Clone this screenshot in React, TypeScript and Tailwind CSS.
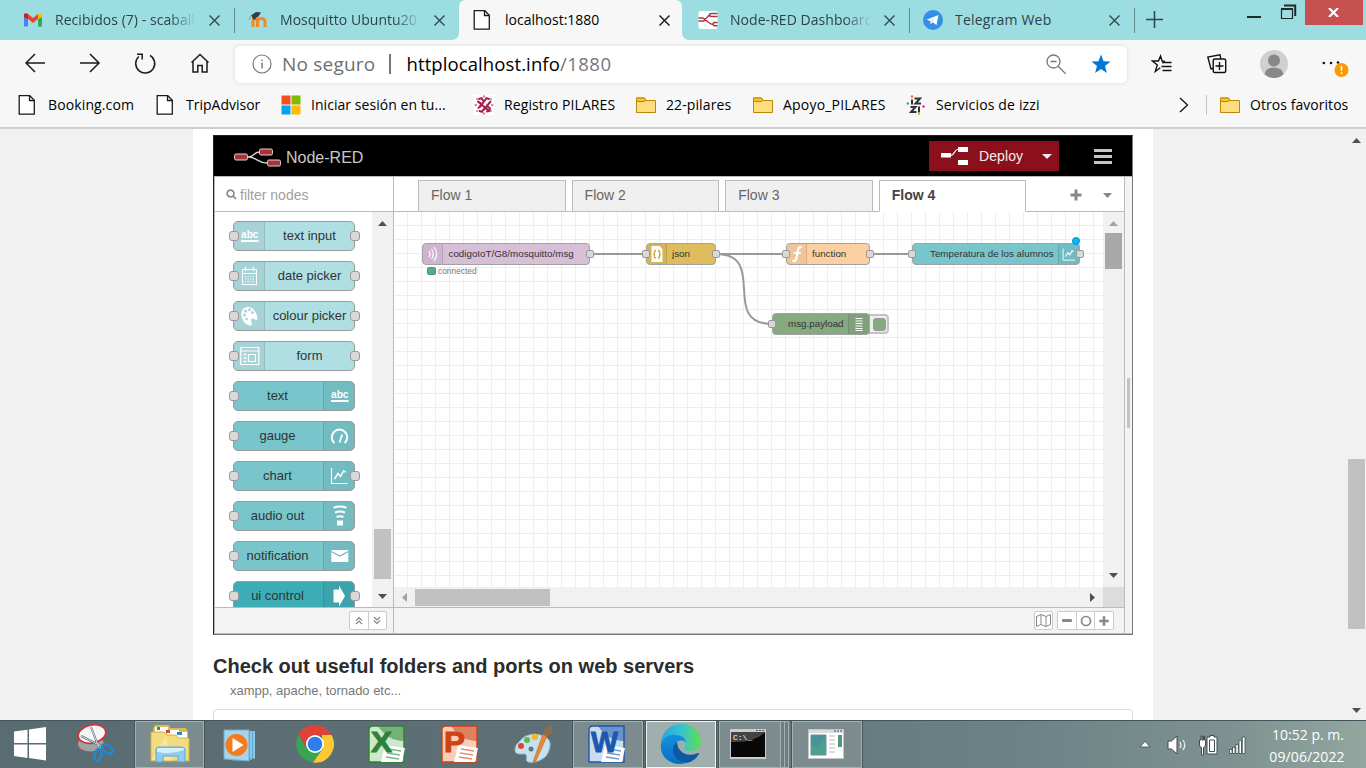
import type { ReactNode } from "react";

const ui = "font-['Open_Sans','Noto_Sans',sans-serif]";
const arial = "font-['Liberation_Sans',Arial,sans-serif]";

/* ---------- small shared drawings ---------- */

function CloseX({ dark }: { dark?: boolean }) {
  return (
    <svg width="11" height="11" viewBox="0 0 11 11" stroke={dark ? "#111" : "#2c4a4d"} strokeWidth="1.4">
      <path d="M.5.5l10 10M10.500.5l-10 10" />
    </svg>
  );
}

function PageIcon() {
  return (
    <svg width="20" height="20" viewBox="0 0 20 20" fill="none" stroke="#1a1a1a" strokeWidth="1.3">
      <path d="M1.200.700h10.600l4.500 4.500v14H1.200z" fill="#fff" />
      <path d="M11.500.700v4.800h4.800" />
    </svg>
  );
}

function FolderIcon() {
  return (
    <svg width="20" height="20" viewBox="0 0 20 20" stroke="#b8860b" strokeWidth="1">
      <path d="M.5 3h8l1.500 2.500h9.500v12H.5z" fill="#ffdc7c" />
      <path d="M.5 3h8l1.200 1.800L8.500 6.500H.5z" fill="#f9c521" />
    </svg>
  );
}

function Triangle({ dir, color = "#505050" }: { dir: "up" | "down" | "left" | "right"; color?: string }) {
  const d = { up: "M0 7l4.500-5L9 7z", down: "M0 2h9L4.500 7z", left: "M7 0v9L2 4.500z", right: "M2 0v9l5-4.500z" }[dir];
  return (
    <svg width="9" height="9" viewBox="0 0 9 9" fill={color} className="shrink-0">
      <path d={d} />
    </svg>
  );
}

/* ---------- browser tabs ---------- */

const gmail = (
  <svg width="20" height="20" viewBox="0 0 20 20">
    <path d="M1 16.500V5.500l4 3v8z" fill="#4285f4" />
    <path d="M15 16.500v-8l4-3v11z" fill="#34a853" />
    <path d="M5 4l5 4 5-4v4.800L10 13 5 8.800z" fill="#ea4335" />
    <path d="M1 7V5c0-2 2-2 4-1v5.200z" fill="#c5221f" />
    <path d="M19 7V5c0-2-2-2-4-1v5.200z" fill="#fbbc04" />
  </svg>
);

const moodle = (
  <svg width="20" height="20" viewBox="0 0 20 20" fill="none">
    <path d="M5 17V11.500c0-4 4-4 4.500-.500V17M9.500 17v-5.500c.500-4 7.500-4.500 7.500.500v5" stroke="#f08a24" strokeWidth="3" />
    <path d="M3 5.500L8 2l5 .500-3 4.500-2 .500-1 2.500C5 9 4 8 4 6.500z" fill="#333c40" />
    <path d="M2.500 6L1 10" stroke="#7c9495" strokeWidth=".8" />
  </svg>
);

const nodeRedFav = (
  <svg width="20" height="20" viewBox="0 0 20 20">
    <rect x=".5" y="1" width="19" height="18" rx="2" fill="#fff" />
    <g fill="none" stroke="#a9383d" strokeWidth="1.400">
      <path d="M.5 8h4q1.500 0 2 1.500t-2 1.500h-4M6.500 9c3 0 3-4 6-4.500M6 10c4 0 5 4.500 9 4.500M19.500 3.500h-6q-2 0-2 1.500t2 1.500h6M19.500 12.500h-3q-1.500 0-1.500 1.500t1.500 1.800h3" />
    </g>
  </svg>
);

const telegram = (
  <svg width="20" height="20" viewBox="0 0 20 20">
    <circle cx="10" cy="10" r="10" fill="#348fe8" />
    <path d="M3.500 9.700L15.500 5l-2 10-3.800-2.700-1.900 1.900-.6-3.200z" fill="#fff" />
    <path d="M7.500 11l5.500-3.800-4.400 4.700-.7 2.100z" fill="#b9d8f7" />
  </svg>
);

function Tab({ icon, title, track, fade, active, line }: { icon: ReactNode; title: string; track: string; fade?: boolean; active?: boolean; line?: boolean }) {
  return (
    <div className={`relative flex h-10 w-[225px] items-center pl-[14px] ${active ? "text-black" : "text-[#2b4548]"}`}>
      {active && (
        <svg className="absolute left-[-8px] top-0" width="240" height="40" viewBox="0 0 240 40">
          <path d="M0 40q8 0 8-8V7q0-7 7-7h209q7 0 7 7v25q0 8 8 8z" fill="#f7f7f7" />
        </svg>
      )}
      <div className="relative flex w-5 items-center">{icon}</div>
      <div
        className={`relative ml-3 w-[143px] overflow-hidden pb-[2px] whitespace-nowrap text-[14px] ${track} ${fade ? "[mask-image:linear-gradient(90deg,#000_80%,transparent_99%)]" : ""}`}
      >
        {title}
      </div>
      <div className="relative ml-[11px]">
        <CloseX dark={active} />
      </div>
      {line && <div className="mr-[-1px] ml-auto h-[25px] w-px bg-[#66898c]" />}
    </div>
  );
}

function TabStrip() {
  return (
    <div className="flex h-10 bg-[#9cdde2] pl-[9px]">
      <Tab icon={gmail} title="Recibidos (7) - scaball" track="tracking-[0.050px]" fade line />
      <Tab icon={moodle} title="Mosquitto Ubuntu20." track="tracking-[0.050px]" fade />
      <Tab icon={<PageIcon />} title="localhost:1880" track="tracking-normal" active />
      <Tab icon={nodeRedFav} title="Node-RED Dashboard" track="tracking-[0.050px]" fade line />
      <Tab icon={telegram} title="Telegram Web" track="tracking-[0.2px]" line />
      <svg className="ml-[12px] mt-[11px]" width="17" height="17" viewBox="0 0 17 17" stroke="#2c4a4d" strokeWidth="1.600">
        <path d="M8.500 0v17M0 8.500h17" />
      </svg>
      <svg className="ml-[84px] mt-[3px]" width="52" height="18" viewBox="0 0 52 18" fill="none" stroke="#1f2a2b">
        <path d="M0 14h14" strokeWidth="2" />
        <path d="M34.500 6.500h11v9h-11z" strokeWidth="1.200" />
        <path d="M34 6h12" strokeWidth="2" />
        <path d="M37 2.500h11.200v10.500" strokeWidth="2" />
      </svg>
      <div className="ml-[6px] flex h-[25px] w-[58px] items-center justify-center bg-[#c75050] pr-[1px] pb-[1px]">
        <svg width="11" height="9" viewBox="0 0 11 9" stroke="#fff" strokeWidth="2.200">
          <path d="M1 0l9 9M10 0L1 9" />
        </svg>
      </div>
    </div>
  );
}

/* ---------- toolbar ---------- */

function Toolbar() {
  return (
    <div className="flex h-12 items-center bg-[#f7f7f7] pl-[25px]">
      <svg width="190" height="22" viewBox="0 0 190 22" fill="none" stroke="#1b1b1b" strokeWidth="1.500">
        <path d="M20 10H1M10 1L1 10l9 9" />
        <path d="M55 10h19M65 1l9 9-9 9" />
        <path d="M125 2.300A9.500 9.500 0 1 1 113.800 3.500M112 1.300h5.200v5.200" />
        <path d="M166.500 9.500l8.500-8 8.500 8M168 8.300v10.700h4.800v-6.500h4.400v6.500h4.800V8.300" />
      </svg>
      <div className="ml-5 flex h-[37px] w-[892px] items-center rounded-[5px] bg-white pl-[17px] shadow-[0_0_4px_rgba(0,0,0,0.12)]">
        <svg width="20" height="20" viewBox="0 0 20 20" fill="none" stroke="#767676" strokeWidth="1.200">
          <circle cx="10" cy="10" r="9" />
          <path d="M10 8.500v6M10 5.500v1.500" strokeWidth="1.400" />
        </svg>
        <span className="ml-[10px] w-[107px] text-[19px] tracking-[0.2px] text-[#6f6f6f]">No seguro</span>
        <span className="h-5 w-[1.500px] bg-[#777]" />
        <span className="ml-[16px] text-[18.500px] tracking-[0.1px] whitespace-nowrap text-black">
          httplocalhost.info<span className="tracking-[0.5px] text-[#767676]">/1880</span>
        </span>
        <svg className="ml-auto mr-[25px]" width="21" height="21" viewBox="0 0 21 21" fill="none" stroke="#777" strokeWidth="1.300">
          <circle cx="8.500" cy="7.500" r="6.500" />
          <path d="M13.200 12.300l7.500 7.500M5.500 7.500h6" />
        </svg>
        <svg className="mr-4" width="20" height="20" viewBox="0 0 20 20" fill="#0078d7">
          <path d="M10 .5l2.500 6.700 7 .3-5.500 4.400 1.900 7L10 15l-5.900 3.900L6 11.900.5 7.500l7-.3z" />
        </svg>
      </div>
      <svg className="ml-[24px]" width="22" height="20" viewBox="0 0 22 20" fill="none" stroke="#111" strokeWidth="1.400">
        <path d="M14 7.200l-2.900-.2L9.500 2 7.500 7H1.300l5 3.900-2 6.600 5-3.700M11 8.500h9.500M10.500 12.500h10M11.500 16.500h9" />
      </svg>
      <svg className="ml-[34px]" width="20" height="20" viewBox="0 0 20 20" fill="none" stroke="#111" strokeWidth="1.400">
        <path d="M6 14.500L4 15 .8 3 13 .8l.8 3.700" />
        <rect x="6.200" y="5" width="12.500" height="13.500" rx="1.500" fill="#f7f7f7" />
        <path d="M12.500 8v8M8.500 12h8" />
      </svg>
      <svg className="ml-[33px]" width="28" height="28" viewBox="0 0 28 28">
        <circle cx="14" cy="14" r="14" fill="#d2d0ce" />
        <circle cx="14" cy="10.500" r="6" fill="#8a8886" />
        <path d="M4.500 24.200Q6 17.500 14 17.500t9.500 6.700A14 14 0 0 1 4.500 24.200z" fill="#8a8886" />
      </svg>
      <svg className="ml-[34px]" width="28" height="26" viewBox="0 0 28 26">
        <g fill="#111">
          <circle cx="1.800" cy="12" r="1.300" />
          <circle cx="9" cy="12" r="1.300" />
          <circle cx="16" cy="11.500" r="1.300" />
        </g>
        <circle cx="19.500" cy="19" r="7" fill="#f79a05" />
        <path d="M19.500 14.800v5M19.500 21.300v1.700" stroke="#fff" strokeWidth="1.500" />
      </svg>
    </div>
  );
}

/* ---------- bookmarks ---------- */

const msLogo = (
  <svg width="20" height="20" viewBox="0 0 20 20">
    <path d="M.5.5h9v9h-9z" fill="#f25022" />
    <path d="M10.500.5h9v9h-9z" fill="#7fba00" />
    <path d="M.5 10.500h9v9h-9z" fill="#00a4ef" />
    <path d="M10.500 10.500h9v9h-9z" fill="#ffb900" />
  </svg>
);

const pilares = (
  <svg width="20" height="20" viewBox="0 0 20 20" fill="none">
    <rect width="20" height="20" fill="#fff" />
    <g stroke="#a91e4b" strokeWidth="2" strokeLinecap="round">
      <path d="M5 4l2.500-.8 1.700 2.600M4 6.500l10.500 9M7 8.500L5 7M15 4l-2.500-.8L6 12M16.500 6.500l-6.500 8M4.500 13l2-2.500M5.500 16l2.500.8 2-3M13 16.500l2.500-.5.5-2.500-3-2.500" />
    </g>
    <g fill="#cf7f98">
      <circle cx="10" cy="1.500" r="1.200" />
      <circle cx="10" cy="18.500" r="1.200" />
      <circle cx="1.800" cy="10" r="1.200" />
      <circle cx="18.200" cy="10" r="1.200" />
      <circle cx="3" cy="4" r="1" />
      <circle cx="17" cy="4" r="1" />
      <circle cx="3" cy="16" r="1" />
      <circle cx="17" cy="16" r="1" />
    </g>
  </svg>
);

const izzi = (
  <svg width="20" height="20" viewBox="0 0 20 20" fill="none" stroke="#333" strokeWidth="2">
    <path d="M6 4.500v5M8.500 3.500h5.500L9.500 8.500H15M4.500 12H9.500L5 17h5.500M13 11.500v6" />
    <g stroke="none">
      <circle cx="6" cy="1.500" r="1.200" fill="#f26b21" />
      <circle cx="1.800" cy="8.500" r="1.200" fill="#2aa6a0" />
      <circle cx="17.500" cy="11.500" r="1.200" fill="#d6268f" />
      <circle cx="13" cy="19" r="1.200" fill="#f4c20d" />
    </g>
  </svg>
);

function Bookmark({ icon, text, width, track = "" }: { icon: ReactNode; text: string; width: string; track?: string }) {
  return (
    <div className={`flex shrink-0 items-center gap-[10px] whitespace-nowrap ${width} ${track}`}>
      <span className="w-5 shrink-0">{icon}</span>
      {text}
    </div>
  );
}

function Bookmarks() {
  return (
    <div className="flex h-[39px] items-center bg-[#f7f7f7] pb-[6px] pl-[18px] text-[14px] text-black">
      <Bookmark icon={<PageIcon />} text="Booking.com" width="w-[138px] -mr-px pr-px" track="tracking-[0.120px]" />
      <Bookmark icon={<PageIcon />} text="TripAdvisor" width="ml-px w-[125px]" />
      <Bookmark icon={msLogo} text="Iniciar sesión en tu..." width="w-[193px]" track="tracking-[0.050px]" />
      <Bookmark icon={pilares} text="Registro PILARES" width="w-[162px]" track="tracking-[0.100px]" />
      <Bookmark icon={<FolderIcon />} text="22-pilares" width="w-[117px]" track="tracking-[0.100px]" />
      <Bookmark icon={<FolderIcon />} text="Apoyo_PILARES" width="w-[153px]" track="tracking-[0.200px]" />
      <Bookmark icon={izzi} text="Servicios de izzi" width="w-[273px]" track="tracking-[0.160px]" />
      <svg width="10" height="16" viewBox="0 0 10 16" fill="none" stroke="#111" strokeWidth="1.300">
        <path d="M1 1l7.500 7L1 15" />
      </svg>
      <div className="mr-[13px] ml-[17px] h-5 w-px bg-[#c4c4c4]" />
      <Bookmark icon={<FolderIcon />} text="Otros favoritos" width="w-[130px]" track="tracking-[0.050px]" />
    </div>
  );
}

/* ---------- palette ---------- */

const abcIcon = (
  <svg width="20" height="18" viewBox="0 0 20 18" fill="#fff">
    <text x="1" y="11" fontSize="11" fontWeight="700" fontFamily="Liberation Sans" textLength="17.500" lengthAdjust="spacingAndGlyphs">abc</text>
    <path d="M1 13h17.500v2H1z" />
  </svg>
);
const calendarIcon = (
  <svg width="18" height="20" viewBox="0 0 18 20" fill="none" stroke="#fff">
    <path d="M1.500 3.500h14v15h-14zM1.500 7.500h14" />
    <path d="M4.500 1v4M12.500 1v4" strokeWidth="1.500" />
    <path d="M4 10.500h10M4 13h10M4 15.500h10" strokeDasharray="1.200 1.400" />
  </svg>
);
const paletteIcon = (
  <svg width="20" height="20" viewBox="0 0 20 20">
    <path d="M8 1C3 1 1 5 1.500 9.500 2 15 6 19 10 19.500c2.500 0 2-2.500 1.300-4.200-.8-2 .7-3.300 2.700-2.500 1 .4 2 2.700 3.300 1C18 9 14 1 8 1z" fill="#fff" />
    <g fill="#a9d3d7">
      <circle cx="4.500" cy="9" r="1.500" />
      <circle cx="5.500" cy="5" r="1.500" />
      <circle cx="9.500" cy="3.800" r="1.500" />
      <circle cx="12.500" cy="6.500" r="1.500" />
      <circle cx="6.500" cy="13" r="1.300" />
    </g>
  </svg>
);
const formIcon = (
  <svg width="20" height="20" viewBox="0 0 20 20" fill="none" stroke="#fff">
    <path d="M.8 1.500h18v17H.8zM.8 5h18M8.500 8.500h7v7h-7z" strokeWidth="1.200" />
    <path d="M3.500 8.500h3M3.500 12h3M3.500 15.500h3" strokeWidth="1.300" />
  </svg>
);
const gaugeIcon = (
  <svg width="20" height="20" viewBox="0 0 20 20" fill="none" stroke="#fff" strokeWidth="2">
    <path d="M4.300 17A7.700 7.700 0 1 1 14.700 17" />
    <path d="M12.200 8.500L9.500 16.500" strokeWidth="1.800" />
  </svg>
);
function ChartIcon({ size = "20" }: { size?: string }) {
  return (
    <svg width={size} height={size} viewBox="0 0 20 20" fill="none" stroke="#fff" strokeWidth="1.200">
      <path d="M1.500 2v15.500h16" />
      <path d="M4.500 13l3.500-5.500 2.500 3 3-5.500 2 1" strokeWidth="1.500" />
    </svg>
  );
}
const audioIcon = (
  <svg width="18" height="22" viewBox="0 0 18 22" fill="none" stroke="#fff" strokeWidth="2">
    <path d="M2.500 2.800q6.500-2.400 13 0M4 7.500q5-2 10 0M5.500 12q3.500-1.600 7 0" />
    <path d="M6 15.500h6v5H6z" fill="#fff" stroke="none" />
  </svg>
);
const mailIcon = (
  <svg width="20" height="14" viewBox="0 0 20 14">
    <path d="M1.300 1h17v12h-17z" fill="#fff" />
    <path d="M1.300 2.500l8.500 4.500 8.500-4.500" fill="none" stroke="#71b9c0" strokeWidth="1.300" />
  </svg>
);
const arrowIcon = (
  <svg width="20" height="22" viewBox="0 0 20 22" fill="#fff">
    <path d="M3.500 4.500h5.500V.5l6 10.500L9 21.500v-4H3.500z" />
  </svg>
);

function Port({ pos }: { pos: string }) {
  return <span className={`absolute size-[10px] rounded-[3px] border border-[#999] bg-[#d9d9d9] ${pos}`} />;
}

function PaletteNode({ label, icon, side, color, output }: { label: string; icon: ReactNode; side: "left" | "right"; color: string; output?: boolean }) {
  const box = (
    <span className={`flex w-[31px] items-center justify-center bg-black/5 pl-[2px] ${side === "left" ? "rounded-l-[4px] border-r" : "rounded-r-[4px] border-l"} border-black/10`}>
      {icon}
    </span>
  );
  return (
    <div className={`relative flex h-[30px] w-[122px] shrink-0 rounded-[5px] border border-[#999] ${color}`}>
      {side === "left" && box}
      <span className={`flex-1 pt-[5px] text-center text-[13px] leading-[18px] whitespace-nowrap text-[#333] ${side === "right" ? "pr-[2px]" : ""}`}>{label}</span>
      {side === "right" && box}
      <Port pos="left-[-5px] top-[9px]" />
      {output && <Port pos="right-[-6px] top-[9px]" />}
    </div>
  );
}

function Palette() {
  const light = "bg-[#b0dfe3]";
  const mid = "bg-[#78c6cc]";
  return (
    <div className="flex w-[179px] shrink-0 flex-col border-r border-[#bbb]">
      <div className="flex h-[35px] items-center border-b border-[#bbb] bg-white pl-[11px]">
        <svg width="11" height="11" viewBox="0 0 11 11" fill="none" stroke="#888" strokeWidth="1.700">
          <circle cx="4.500" cy="4.500" r="3.400" />
          <path d="M7 7l3 3" />
        </svg>
        <span className="ml-[3px] pt-[2px] text-[14px] text-[#a0a0a0]">filter nodes</span>
      </div>
      <div className="flex h-[395px] overflow-hidden">
        <div className="flex flex-1 flex-col gap-[10px] bg-white pl-[18px] pt-[9px]">
          <PaletteNode label="text input" icon={abcIcon} side="left" color={light} output />
          <PaletteNode label="date picker" icon={calendarIcon} side="left" color={light} output />
          <PaletteNode label="colour picker" icon={paletteIcon} side="left" color={light} output />
          <PaletteNode label="form" icon={formIcon} side="left" color={light} output />
          <PaletteNode label="text" icon={abcIcon} side="right" color={mid} />
          <PaletteNode label="gauge" icon={gaugeIcon} side="right" color={mid} />
          <PaletteNode label="chart" icon={<ChartIcon />} side="right" color={mid} output />
          <PaletteNode label="audio out" icon={audioIcon} side="right" color={mid} />
          <PaletteNode label="notification" icon={mailIcon} side="right" color={mid} />
          <PaletteNode label="ui control" icon={arrowIcon} side="right" color="bg-[#3fadb5]" output />
        </div>
        <div className="flex w-[21px] flex-col items-center bg-[#f1f1f1] pt-[7px]">
          <Triangle dir="up" />
          <div className="mt-[301px] h-[50px] w-[17px] bg-[#c1c1c1]" />
          <div className="mt-[13px]">
            <Triangle dir="down" />
          </div>
        </div>
      </div>
      <div className="flex h-[26px] items-center justify-end border-t border-[#bbb] bg-[#f3f3f3] pr-[6px]">
        <div className="flex h-[19px] w-[38px] rounded-[2px] border border-[#ccc] bg-white">
          <span className="flex flex-1 items-center justify-center border-r border-[#ccc]">
            <svg width="8" height="9" viewBox="0 0 8 9" fill="none" stroke="#888" strokeWidth="1.200">
              <path d="M1 4.600L4 1.700l3 2.900M1 8L4 5.100 7 8" />
            </svg>
          </span>
          <span className="flex flex-1 items-center justify-center">
            <svg width="8" height="9" viewBox="0 0 8 9" fill="none" stroke="#888" strokeWidth="1.200">
              <path d="M1 1l3 2.900L7 1M1 4.500l3 2.900 3-2.900" />
            </svg>
          </span>
        </div>
      </div>
    </div>
  );
}

/* ---------- workspace ---------- */

function FlowTab({ name, active }: { name: string; active?: boolean }) {
  return (
    <div
      className={`h-[32px] w-[147.600px] border border-[#bbb] pl-3 pt-[5px] text-[14px] leading-[18px] ${active ? "border-b-white bg-white font-bold text-[#444]" : "bg-[#f0f0f0] text-[#666]"}`}
    >
      {name}
    </div>
  );
}

function SmallPort({ pos }: { pos: string }) {
  return <span className={`absolute size-[8px] rounded-[2px] border border-[#999] bg-[#d9d9d9] ${pos}`} />;
}

function FlowNode({ place, label, children, labelClass }: { place: string; label: string; labelClass: string; children?: ReactNode }) {
  return (
    <div className={`absolute flex h-[22px] rounded-[4px] border border-[#a3a3a3] ${place}`}>
      <span className={`absolute top-[4px] text-[9.800px] leading-[12px] whitespace-nowrap text-[#333] ${labelClass}`}>{label}</span>
      {children}
    </div>
  );
}

function Canvas() {
  return (
    <div className="relative h-[375px] w-[709px] overflow-hidden bg-white bg-[linear-gradient(to_right,#eee_1px,transparent_1px),linear-gradient(to_bottom,#eee_1px,transparent_1px)] bg-[size:14px_14px] bg-[position:13px_13px]">
      <svg className="absolute inset-0" width="709" height="375" viewBox="0 0 709 375" fill="none" stroke="#999" strokeWidth="2">
        <path d="M196 42h56M322 42h70M476 42h42M322 42c53 0 3 70 56 70" />
      </svg>
      <FlowNode place="left-[28px] top-[31px] w-[168px] bg-[#d8bfd8]" label="codigoIoT/G8/mosquitto/msg" labelClass="left-[25.500px]">
        <span className="flex w-[20px] items-center justify-center rounded-l-[3px] border-r border-black/10 bg-black/5">
          <svg width="12" height="18" viewBox="0 0 12 18" fill="none" stroke="#fff" strokeWidth="1.200">
            <path d="M2 6q2 3 0 6M4.500 4q3.500 5 0 10M7 2q5.500 7 0 14" />
          </svg>
        </span>
        <SmallPort pos="right-[-5px] top-[6px]" />
      </FlowNode>
      <div className="absolute left-[33px] top-[54px] flex items-center gap-[2px] text-[8.400px] leading-[10px] text-[#777]">
        <span className="h-[8px] w-[9px] rounded-[2px] border border-[#4a9c79] bg-[#5a8]" />
        connected
      </div>
      <FlowNode place="left-[252px] top-[31px] w-[70px] bg-[#debd5c]" label="json" labelClass="left-[25px]">
        <span className="flex w-[20px] items-center justify-center rounded-l-[3px] border-r border-black/10 bg-black/5">
          <svg width="12" height="16" viewBox="0 0 12 16">
            <path d="M.5 0h8l3 3v13H.5z" fill="#fff" />
            <path d="M5 4.500q-1.700 0-1.500 1.800T2.300 8.300q1.400.2 1.200 2T5 12M7 4.500q1.700 0 1.500 1.800t1.200 2q-1.400.2-1.200 2T7 12" fill="none" stroke="#c79f30" strokeWidth="1.300" />
          </svg>
        </span>
        <SmallPort pos="left-[-5px] top-[6px]" />
        <SmallPort pos="right-[-5px] top-[6px]" />
      </FlowNode>
      <FlowNode place="left-[392px] top-[31px] w-[84px] bg-[#fdd0a2]" label="function" labelClass="left-[25px]">
        <span className="flex w-[20px] items-center justify-center rounded-l-[3px] border-r border-black/10 bg-black/5">
          <svg width="12" height="18" viewBox="0 0 12 18" fill="none" stroke="#fff" strokeWidth="2.200">
            <path d="M11 2.500Q8 .8 7 5L5.300 13.500Q4.600 17.300 1.500 15.500" />
            <path d="M2.500 8h7.500" strokeWidth="1.600" />
          </svg>
        </span>
        <SmallPort pos="left-[-5px] top-[6px]" />
        <SmallPort pos="right-[-5px] top-[6px]" />
      </FlowNode>
      <FlowNode place="left-[518px] top-[31px] w-[168px] bg-[#78c6cc]" label="Temperatura de los alumnos" labelClass="left-[17px]">
        <span className="ml-auto flex w-[21px] items-center justify-center rounded-r-[3px] border-l border-black/10 bg-black/5">
          <ChartIcon size="15" />
        </span>
        <SmallPort pos="left-[-5px] top-[6px]" />
        <SmallPort pos="right-[-5px] top-[6px]" />
        <span className="absolute right-[-1px] top-[-7px] size-[8px] rounded-full border border-[#0091cc] bg-[#00bcff]" />
      </FlowNode>
      <div className="absolute left-[466px] top-[102px] flex h-[20px] w-[29px] items-center justify-end rounded-[4px] border-2 border-[#c4c4c4] bg-[#eee] pr-[1px]">
        <span className="size-[13px] rounded-[3px] border border-[#999] bg-[#87a980]" />
      </div>
      <FlowNode place="left-[378px] top-[101px] w-[98px] bg-[#87a980]" label="msg.payload" labelClass="left-[15px]">
        <span className="ml-auto flex w-[21px] items-center justify-center rounded-r-[3px] border-l border-black/10 bg-black/5">
          <svg width="8" height="14" viewBox="0 0 8 14" stroke="#fff" strokeWidth="1">
            <path d="M.5 1.500h7M.5 4h7M.5 6.500h7M.5 9h7M.5 11.500h7M.5 13.500h7" />
          </svg>
        </span>
        <SmallPort pos="left-[-5px] top-[6px]" />
      </FlowNode>
    </div>
  );
}

function Workspace() {
  return (
    <div className="flex w-[730px] shrink-0 flex-col">
      <div className="flex h-[35px] border-b border-[#bbb] bg-white pl-6 pt-[3px]">
        <div className="flex gap-[6px]">
          <FlowTab name="Flow 1" />
          <FlowTab name="Flow 2" />
          <FlowTab name="Flow 3" />
          <FlowTab name="Flow 4" active />
        </div>
        <svg className="ml-[43.600px] mt-[9px]" width="12" height="12" viewBox="0 0 12 12" stroke="#888" strokeWidth="3">
          <path d="M6 .5v11M.5 6h11" />
        </svg>
        <svg className="ml-[21.500px] mt-[13px]" width="9" height="5" viewBox="0 0 9 5" fill="#888">
          <path d="M0 0h9L4.500 5z" />
        </svg>
      </div>
      <div className="flex h-[375px]">
        <Canvas />
        <div className="flex w-[21px] flex-col items-center bg-[#f1f1f1] pt-[7px]">
          <Triangle dir="up" color="#a3a3a3" />
          <div className="mt-[5px] h-[36px] w-[17px] bg-[#a8a8a8]" />
          <div className="mt-auto mb-[7px]">
            <Triangle dir="down" />
          </div>
        </div>
      </div>
      <div className="flex h-[20px] items-center bg-[#f1f1f1] pl-[6px]">
        <Triangle dir="left" color="#a3a3a3" />
        <div className="ml-[6px] h-[17px] w-[135px] bg-[#c1c1c1]" />
        <div className="ml-auto mr-[6px]">
          <Triangle dir="right" />
        </div>
        <div className="h-full w-[21px] bg-[#dcdcdc]" />
      </div>
      <div className="flex h-[26px] items-center justify-end border-t border-[#bbb] bg-[#f3f3f3] pr-[10px]">
        <span className="mr-1 flex h-[19px] w-[19px] items-center justify-center rounded-[2px] border border-[#ccc] bg-white">
          <svg width="15" height="13" viewBox="0 0 15 13" fill="none" stroke="#888" strokeWidth="1">
            <path d="M.5 2.500l4.500-2 5 2 4.500-2v10l-4.500 2-5-2-4.500 2zM5 .5v10M10 2.500v10" />
          </svg>
        </span>
        <div className="flex h-[19px] w-[57px] rounded-[2px] border border-[#ccc] bg-white">
          <span className="flex flex-1 items-center justify-center border-r border-[#ccc]">
            <span className="h-[3px] w-[10px] rounded-[1px] bg-[#888]" />
          </span>
          <span className="flex flex-1 items-center justify-center border-r border-[#ccc]">
            <svg width="12" height="12" viewBox="0 0 12 12" fill="none" stroke="#888" strokeWidth="1.700">
              <circle cx="6" cy="6" r="4.500" />
            </svg>
          </span>
          <span className="flex flex-1 items-center justify-center">
            <svg width="10" height="10" viewBox="0 0 10 10" stroke="#888" strokeWidth="2.600">
              <path d="M5 .3v9.400M.3 5h9.400" />
            </svg>
          </span>
        </div>
      </div>
    </div>
  );
}

function Editor() {
  return (
    <div className={`flex h-[500px] w-[920px] flex-col border border-[#777] border-l-[#222] border-t-[#222] bg-white ${arial}`}>
      <div className="flex h-10 shrink-0 items-center bg-black pl-[20px]">
        <svg className="mt-[2px]" width="47" height="19" viewBox="0 0 47 19">
          <g fill="none" stroke="#d6d6d6" strokeWidth="1.300">
            <path d="M14 9c7 0 5-5 12-5M14 9c9 0 9 6 19 6" />
          </g>
          <g fill="#a83238" stroke="#e2cfcf" strokeWidth="1">
            <rect x=".5" y="6" width="13" height="6" rx="1.500" />
            <rect x="25.500" y="1" width="13" height="6" rx="1.500" />
            <rect x="33.500" y="12" width="13" height="6" rx="1.500" />
          </g>
        </svg>
        <span className="ml-[5px] pt-[4px] text-[16px] text-[#c8c8c8]">Node-RED</span>
        <div className="ml-auto flex h-[30px] w-[130px] items-center bg-[#8c101c] pl-3">
          <svg width="28" height="18" viewBox="0 0 28 18" fill="#fff">
            <path d="M0 6h10v4.500H0zM17 0h10v5H17zM17 13h10v5H17z" />
            <path d="M10 8.300q2 0 3.500-3T17 2.500" fill="none" stroke="#fff" strokeWidth="1.200" />
          </svg>
          <span className="ml-[10px] text-[14px] tracking-[0.1px] text-[#eee]">Deploy</span>
          <svg className="ml-[19px]" width="10" height="5" viewBox="0 0 10 5" fill="#eee">
            <path d="M0 0h10L5 5z" />
          </svg>
        </div>
        <div className="ml-[35px] mr-5 flex w-[18px] flex-col gap-[3px]">
          <span className="h-[3px] bg-[#c7c7c7]" />
          <span className="h-[3px] bg-[#c7c7c7]" />
          <span className="h-[3px] bg-[#c7c7c7]" />
        </div>
      </div>
      <div className="flex flex-1 border-y border-l border-[#bbb]">
        <Palette />
        <Workspace />
        <div className="flex flex-1 items-center border-l border-[#bbb] bg-[#f3f3f3] pl-[2px]">
          <span className="mb-[4px] h-[50px] w-[3px] bg-[#c4c4c4]" />
        </div>
      </div>
    </div>
  );
}

/* ---------- taskbar ---------- */

function OfficeIcon({ letter, color, pale }: { letter: string; color: string; pale: string }) {
  return (
    <svg width="38" height="38" viewBox="0 0 38 38">
      <path d="M1 37V5q0-4 4-4h31v36z" fill={pale} stroke={color} strokeWidth="1.400" />
      <path d="M36 1v15Q20 16 10 1z" fill={color} opacity=".55" />
      <path d="M17 20l20 3-3 14H13z" fill="#fff" />
      <path d="M20 24l13 2M19 28l13 2M18 32l13 2" stroke={color} strokeWidth="1.300" opacity=".6" />
      <text x="3" y="27" fontSize="29" fontWeight="700" fontFamily="Liberation Sans" fill={color} stroke={color} textLength={letter === "W" ? "27" : "21"} lengthAdjust="spacingAndGlyphs">
        {letter}
      </text>
    </svg>
  );
}

function TaskButton({ width, bright, children }: { width: string; bright?: boolean; children: ReactNode }) {
  return (
    <div
      className={`flex h-[47px] shrink-0 items-center justify-center border outline outline-1 outline-offset-0 outline-[#45565a] ${width} ${bright ? "border-[#f0f4f4] bg-[#a0aeae]" : "border-[#a3b1b2] bg-[#7b8b8e]"}`}
    >
      {children}
    </div>
  );
}

function Taskbar() {
  return (
    <div className={`flex h-12 items-center border-t border-[#43545a] bg-[linear-gradient(90deg,#586c72_0%,#5c7076_40%,#6d8285_75%,#7d9290_90%,#93a69f_100%)] pl-[13px] ${ui}`}>
      <svg className="mb-[2px]" width="34" height="34" viewBox="0 0 34 34" fill="#fff">
        <path d="M1 4.500L14.500 2.700V16H1zM16 2.500L33 0v16H16zM1 17.500h13.500V31L1 29zM16 17.500h17V33.500L16 31z" />
      </svg>
      <svg className="ml-[29px] mb-[3px]" width="38" height="40" viewBox="0 0 38 40" fill="none">
        <ellipse cx="15" cy="21" rx="13.500" ry="8" fill="#9aa5a7" stroke="#b94a4d" strokeWidth="1" />
        <ellipse cx="16" cy="11" rx="14" ry="9" transform="rotate(-12 16 11)" fill="#f4f6f7" stroke="#d3343b" strokeWidth="1.800" />
        <path d="M15 4l8 21M5 13l22 11" stroke="#5d6669" strokeWidth="2" />
        <path d="M15 4l8 21M5 13l22 11" stroke="#d6dcde" strokeWidth="1" />
        <ellipse cx="22" cy="32" rx="3.500" ry="6" transform="rotate(15 22 32)" stroke="#2486d0" strokeWidth="2.600" />
        <ellipse cx="31.500" cy="26" rx="3.500" ry="6" transform="rotate(-50 31.500 26)" stroke="#2486d0" strokeWidth="2.600" />
      </svg>
      <div className="ml-[21px]" />
      <TaskButton width="w-[69px]">
        <svg className="mb-[2px]" width="40" height="40" viewBox="0 0 40 40">
          <path d="M3 5l2-4h14l1 3h16l2 4v28H3z" fill="#d8bd55" />
          <path d="M5 3h13v6H5zM17 6h12v6H17zM26 8h11v6H26z" fill="#fff" />
          <path d="M7 3h3v3H7z" fill="#2b9a48" />
          <path d="M16 6h4v3h-4z" fill="#d8442e" />
          <path d="M27 8h5v3h-5z" fill="#2d86cc" />
          <path d="M1 8h13l3 3h9l2 3h11v23H1z" fill="#f3dc80" stroke="#ceb04d" />
          <path d="M2 36L16 12 22 37z" fill="#fff" opacity=".25" />
          <path d="M6 38V26q0-3 3-3h23q3 0 3 3v12h-7v-6H13v6z" fill="#8ecdf0" stroke="#5aa4d2" />
          <path d="M7 28q13 3 27-2v-2H7z" fill="#d5effb" />
        </svg>
      </TaskButton>
      <svg className="ml-[19px]" width="36" height="36" viewBox="0 0 36 36">
        <path d="M10 4h22v27l-22 3z" fill="#5aa9d6" />
        <path d="M28 4v29M31 4v28" stroke="#bfe3f4" />
        <path d="M1 3h25v31L1 32z" fill="#a8d4ea" stroke="#6fb0d2" />
        <circle cx="13.500" cy="18" r="11" fill="#f47c20" />
        <path d="M9.500 11l11 7-11 7z" fill="#fff" />
      </svg>
      <svg className="ml-[37px] mb-[2px]" width="38" height="38" viewBox="0 0 38 38">
        <path d="M19 19L2.500 9.500A19 19 0 0 1 35.500 10H19z" fill="#dd4338" />
        <path d="M2.900 9.500a18.500 18.500 0 0 0 14 28L27 23.500H11z" fill="#3aa455" />
        <path d="M35.500 10A18.500 18.500 0 0 1 17 37.500L27 23.500 26 10z" fill="#fcc934" />
        <path d="M19 10h16.500A19 19 0 0 0 2.500 9.500L11 23.500Q9 12 19 10z" fill="#dd4338" />
        <circle cx="19" cy="19" r="9" fill="#fff" />
        <circle cx="19" cy="19" r="7.300" fill="#2f7de8" />
      </svg>
      <div className="mb-[2px] ml-[34px]">
        <OfficeIcon letter="X" color="#2c8338" pale="#cfe7cb" />
      </div>
      <div className="mb-[2px] ml-[35px]">
        <OfficeIcon letter="P" color="#ce4218" pale="#f9cdb8" />
      </div>
      <svg className="mb-[2px] ml-[35px]" width="40" height="40" viewBox="0 0 40 40">
        <path d="M6 17C11 9 25 8 33 14c5 4 3 10 1 15-3 7-15 11-20 9-4-2 1-6-3-8-5 0-10 1-10-4 0-4 2-7 5-9z" fill="#c7e1f0" stroke="#8cb3c9" />
        <circle cx="7" cy="22" r="3" fill="#e2452f" />
        <circle cx="13" cy="16" r="3" fill="#5db944" />
        <circle cx="21" cy="13" r="3.300" fill="#f5b921" />
        <circle cx="17" cy="25" r="2.500" fill="#597783" />
        <path d="M33 12L21 39l-2-1 10-28z" fill="#e58a35" stroke="#b96520" strokeWidth=".6" />
        <path d="M29 10q1-7 8-9 3 3 0 8l-4 4z" fill="#8c6c4c" />
      </svg>
      <div className="ml-[19px]" />
      <TaskButton width="w-[70px]">
        <div className="mb-[2px] ml-[-3px]">
          <OfficeIcon letter="W" color="#1b58ae" pale="#cbdcf1" />
        </div>
      </TaskButton>
      <div className="ml-[3px]" />
      <TaskButton width="w-[70px]" bright>
        <svg className="mb-[2px] ml-[-1px]" width="42" height="42" viewBox="0 0 42 42">
          <defs>
            <linearGradient id="edgeTop" x1="0" x2="1">
              <stop offset="0" stopColor="#25a9dc" />
              <stop offset=".5" stopColor="#35c3d2" />
              <stop offset="1" stopColor="#5fe04a" />
            </linearGradient>
            <linearGradient id="edgeLow" x1="0" x2="0" y1="0" y2="1">
              <stop offset="0" stopColor="#1492dc" />
              <stop offset="1" stopColor="#0a6cc4" />
            </linearGradient>
          </defs>
          <path d="M1 20C2 8 11 1 21 1c12 0 20 8 20 17 0 7-5 10-10 10-4 0-7-1-7-3 0-1 2-2 2-5 0-5-5-8-10-8C9 12 3 15 1 20z" fill="url(#edgeTop)" />
          <path d="M1 21c2-7 9-10 15-9 6 0 10 4 10 8-2-3-6-3-9-1-7 6-3 18 9 21-13 4-27-5-25-19z" fill="url(#edgeLow)" />
          <path d="M17 19c-8 5-4 19 9 21 6-1 10-4 13-9 0-1 0-1-1-1-9 4-20 1-21-11z" fill="#0c59a4" />
        </svg>
      </TaskButton>
      <div className="ml-[3px]" />
      <div className="flex">
        <TaskButton width="w-[62px]">
          <svg className="mb-[2px] ml-[-4px]" width="36" height="30" viewBox="0 0 36 30">
            <path d="M0 0h36v30H0z" fill="#c9cdce" />
            <path d="M1 3h34v25H1z" fill="#080808" />
            <path d="M1 3h34Q25 14 1 13z" fill="#444" />
            <text x="3" y="11" fontSize="8" fontFamily="Liberation Mono" fill="#fff">C:\_</text>
            <path d="M26 1.500h8" stroke="#555" strokeDasharray="2 1" />
          </svg>
        </TaskButton>
        <div className="h-[47px] w-[4px] border-y border-r border-[#a3b1b2] bg-[#6d7e82]" />
        <div className="h-[47px] w-[4px] border-y border-r border-[#a3b1b2] bg-[#6d7e82]" />
      </div>
      <div className="ml-[3px]" />
      <TaskButton width="w-[70px]">
        <svg className="mb-[2px] ml-[-2px]" width="36" height="30" viewBox="0 0 36 30">
          <path d="M.5.5h35v29H.5z" fill="#fff" stroke="#c1c8ca" />
          <path d="M1 1h34v3H1z" fill="#d8dcdd" />
          <path d="M26 2h8" stroke="#446" strokeDasharray="2 1" />
          <path d="M3 6h15v20H3z" fill="#4ba08e" stroke="#778a93" />
          <path d="M3.500 6.500h14Q14 18 3.500 18z" fill="#4981a6" opacity=".5" />
          <path d="M21 7h6M21 11h6M21 15h6M21 19h6M21 23h6" stroke="#bbb" />
          <path d="M30 6h4v12h-4z" fill="#55967f" />
        </svg>
      </TaskButton>
      <svg className="ml-auto" width="110" height="22" viewBox="0 0 110 22" fill="#fff">
        <path d="M1 13l5-6 5 6z" stroke="#4b5c60" />
        <path d="M29 7h3.500L38 2v18l-5.500-5H29z" stroke="#3d4d50" />
        <path d="M41 8q2 3 0 6M44 6q3.500 5 0 10" fill="none" stroke="#e7eded" strokeWidth="1.300" />
        <g stroke="#3d4d50">
          <path d="M60.500 6v5q0 2 2 2.500V21h2v-7.500q2-.5 2-2.500V6h-1V2h-1v4h-1.500V2h-1v4z" />
          <path d="M68 3h3V1.500h4V3h3v17H68z" />
          <path d="M70.500 6v11.500h5V6z" fill="#fff" />
          <path d="M90.500 15.500h2.500v4h-2.500zM93.500 13.500H96v6h-2.500zM96.800 10.500h2.500v9h-2.500zM100 6.500h2.500v13H100zM103.300 3h2.700v16.500h-2.700z" strokeWidth=".8" />
        </g>
      </svg>
      <div className="ml-[18px] mr-[19px] flex w-[80px] flex-col items-center pt-[2px] text-[14px] leading-[21.500px] whitespace-nowrap text-white">
        <span className="pl-[2px]">10:52 p. m.</span>
        <span className="tracking-[0.1px]">09/06/2022</span>
      </div>
    </div>
  );
}

export default function App() {
  return (
    <div className={`flex h-[768px] w-[1366px] flex-col overflow-hidden ${ui}`}>
      <TabStrip />
      <Toolbar />
      <Bookmarks />
      <div className="flex min-h-0 flex-1 border-t-2 border-[#cfcfcf] bg-[#f1f1f1]">
        <div className={`ml-[193px] flex w-[960px] flex-col bg-white px-5 pt-[6px] ${arial}`}>
          <Editor />
          <h2 className="mt-[19px] text-[20px] leading-6 font-bold whitespace-nowrap text-[#2c2c2c]">Check out useful folders and ports on web servers</h2>
          <p className="mt-[5px] pl-[17px] text-[13px] leading-4 tracking-[-0.030px] text-[#777]">xampp, apache, tornado etc...</p>
          <div className="mt-[10px] h-[20px] rounded-t-[4px] border border-b-0 border-[#ddd]" />
        </div>
        <div className="ml-auto flex w-[18px] flex-col items-center pr-[1px] pt-[7px]">
          <Triangle dir="up" />
          <div className="mt-[314px] h-[170px] w-[17px] bg-[#c1c1c1]" />
          <div className="mt-[77px]">
            <Triangle dir="down" />
          </div>
        </div>
      </div>
      <Taskbar />
    </div>
  );
}
